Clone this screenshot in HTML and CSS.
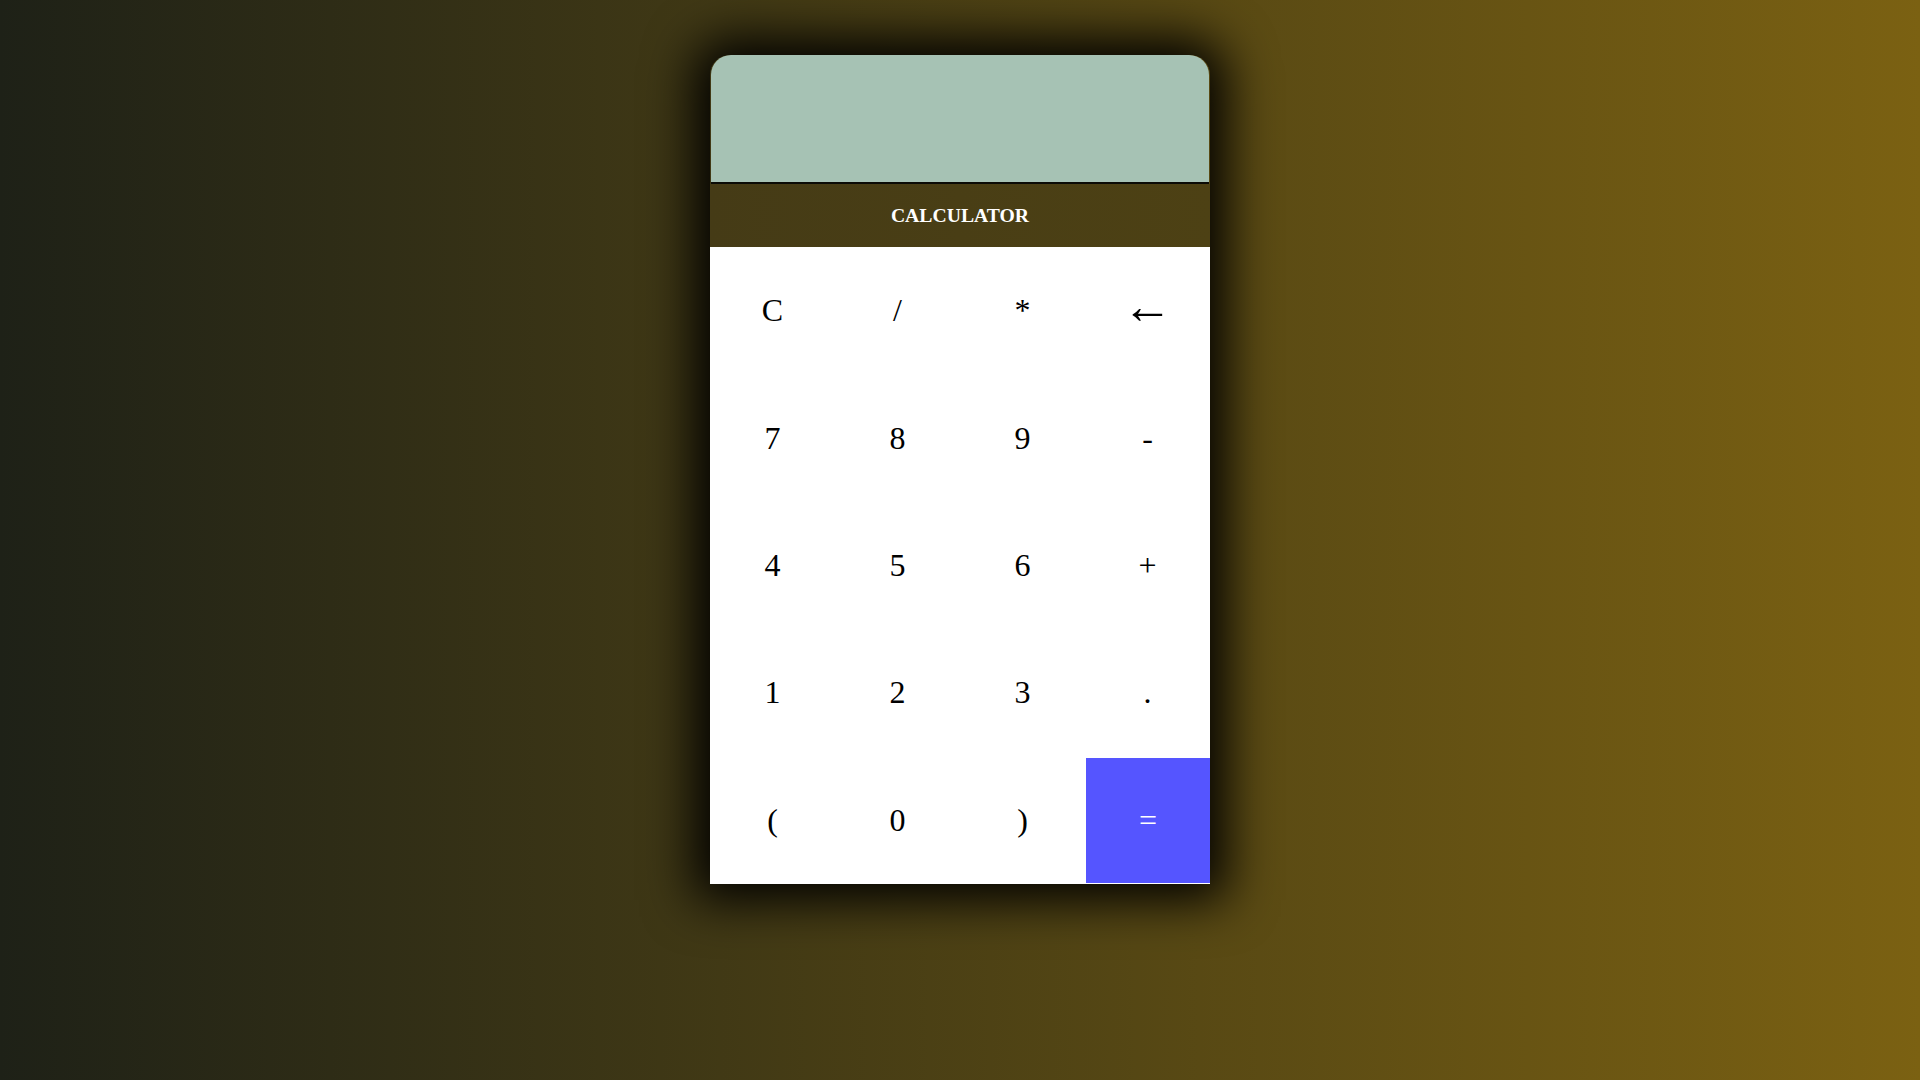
FILE: index.html
```html
<!DOCTYPE html>
<html lang="en">
<head>
<meta charset="utf-8">
<title>Calculator</title>
<link rel="stylesheet" href="styles.css">
</head>
<body>
<div class="calculator">
  <div class="display"></div>
  <div class="title">CALCULATOR</div>
  <div class="keys">
    <button class="key">C</button>
    <button class="key">/</button>
    <button class="key">*</button>
    <button class="key"><span class="arrow">&larr;</span></button>
    <button class="key">7</button>
    <button class="key">8</button>
    <button class="key">9</button>
    <button class="key">-</button>
    <button class="key">4</button>
    <button class="key">5</button>
    <button class="key">6</button>
    <button class="key">+</button>
    <button class="key">1</button>
    <button class="key">2</button>
    <button class="key">3</button>
    <button class="key">.</button>
    <button class="key">(</button>
    <button class="key">0</button>
    <button class="key">)</button>
    <button class="key equals">=</button>
  </div>
</div>
</body>
</html>
```
FILE: styles.css
```css
html, body {
  margin: 0;
  padding: 0;
}
body {
  min-height: 100vh;
  background: linear-gradient(to right, #1e2117, #7b6112);
  font-family: "Liberation Serif", "Times New Roman", serif;
  overflow: hidden;
}
.calculator {
  width: 500px;
  margin: 55px auto 0;
  box-shadow: 0 0 50px 16px #000;
  border-radius: 20px 20px 0 0;
}
.display {
  height: 127px;
  margin: 0 1px;
  background: #a6c2b4;
  border-radius: 20px 20px 0 0;
  border-bottom: 2px solid #0b0b06;
}
.title {
  height: 63px;
  display: flex;
  align-items: center;
  justify-content: center;
  background: linear-gradient(to right, #453b16, #4d4114);
  color: #fff;
  font-weight: bold;
  font-size: 19.7px;
}
.keys {
  display: grid;
  grid-template-columns: repeat(4, 125px);
  grid-template-rows: repeat(5, 127.4px);
  background: #fff;
}
.key {
  border: 0;
  margin: 0;
  padding: 0;
  background: #fff;
  color: #000;
  font-family: "Liberation Serif", "Times New Roman", serif;
  font-size: 32px;
  cursor: pointer;
}
.arrow {
  display: inline-block;
  font-size: 50px;
  line-height: 1;
  transform: translateY(-5px);
}
.equals {
  background: #5555ff;
  color: #fff;
  margin: 1px 0 1px 1px;
}
```
